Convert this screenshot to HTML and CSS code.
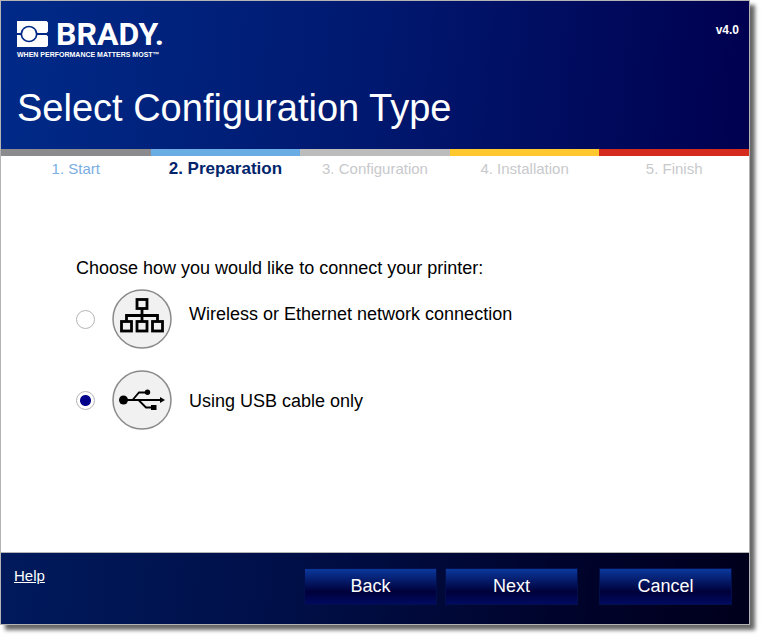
FILE: index.html
```html
<!DOCTYPE html>
<html lang="en">
<head>
  <meta charset="UTF-8">
  <meta name="viewport" content="width=device-width, initial-scale=1.0">
  <title>Select Configuration Type</title>
  <link rel="stylesheet" href="styles.css">
</head>
<body>
  <form class="wizard">
    <header class="banner">
      <div class="banner-top">
        <div class="logo">
          <div class="logo-row">
            <svg class="logo-mark" viewBox="0 0 31 26" aria-hidden="true">
              <path fill="#fff" d="M0 0H29.500L31 1.500V10.500L29.500 12H20.500A8.600 8.600 0 0 0 3.500 12H0Z"/>
              <path fill="#fff" d="M0 14H3.500A8.600 8.600 0 0 0 20.500 14H29.500L31 15.500V24.500L29.500 26H0Z"/>
              <circle cx="12" cy="13" r="6.800" fill="#fff"/>
            </svg>
            <span class="logo-name">BRADY.</span>
          </div>
          <div class="tagline">WHEN PERFORMANCE MATTERS MOST™</div>
        </div>
        <span class="version">v4.0</span>
      </div>
      <h1>Select Configuration Type</h1>
    </header>

    <ol class="steps">
      <li class="step start">1. Start</li>
      <li class="step preparation" aria-current="step">2. Preparation</li>
      <li class="step configuration">3. Configuration</li>
      <li class="step installation">4. Installation</li>
      <li class="step finish">5. Finish</li>
    </ol>

    <main class="content">
      <p class="question" id="question">Choose how you would like to connect your printer:</p>
      <div class="options" role="radiogroup" aria-labelledby="question">
        <div class="option-marks">
          <div class="option-mark">
            <input type="radio" name="connection" id="network" value="network">
            <svg class="option-icon" viewBox="0 0 60 60" aria-hidden="true">
              <circle cx="30" cy="30" r="29" fill="#f1f1f1" stroke="#8a8a8a" stroke-width="1.500"/>
              <g fill="none" stroke="#000" stroke-width="2.800">
                <rect x="25" y="10.500" width="10" height="9"/>
                <rect x="9.500" y="32.500" width="10" height="9.500"/>
                <rect x="25" y="32.500" width="10" height="9.500"/>
                <rect x="40.500" y="32.500" width="10" height="9.500"/>
                <path d="M30 20V33M14.500 33V26.500H45.500V33"/>
              </g>
            </svg>
          </div>
          <div class="option-mark">
            <input type="radio" name="connection" id="usb" value="usb" checked>
            <svg class="option-icon" viewBox="0 0 60 60" aria-hidden="true">
              <circle cx="30" cy="30" r="29" fill="#f1f1f1" stroke="#8a8a8a" stroke-width="1.500"/>
              <circle cx="11.500" cy="30" r="4.500"/>
              <path d="M12 30H50M20.500 30L27 22.500H35M26.500 30L34 37.500H40" fill="none" stroke="#000" stroke-width="1.800"/>
              <path d="M48 27L53 30L48 33Z"/>
              <circle cx="35.500" cy="22.300" r="2.700"/>
              <rect x="39" y="35" width="5.500" height="5"/>
            </svg>
          </div>
        </div>
        <div class="option-names">
          <label for="network">Wireless or Ethernet network connection</label>
          <label for="usb">Using USB cable only</label>
        </div>
      </div>
    </main>

    <footer class="actions">
      <a class="help" href="#">Help</a>
      <div class="buttons">
        <button type="button">Back</button>
        <button type="button">Next</button>
        <button type="button" class="cancel">Cancel</button>
      </div>
    </footer>
  </form>
</body>
</html>
```
FILE: styles.css
```css
* {
  box-sizing: border-box;
}

body {
  margin: 0;
  padding: 0 15px 15px 0;
  background: #fff;
  color: #000;
  font-family: "Liberation Sans", Arial, sans-serif;
  font-size: 18px;
  line-height: 20px;
}

.wizard {
  display: flex;
  flex-direction: column;
  min-height: calc(100vh - 15px);
  border: 1px solid #b4b4b4;
  background: #fff;
  box-shadow: 5px 5px 4px rgba(0, 0, 0, 0.6);
}

.banner {
  height: 148px;
  padding: 19px 10px 0 16px;
  background: linear-gradient(95deg, #002a88, #00186f 50%, #00004f);
  color: #fff;
}

.banner-top {
  display: flex;
  justify-content: space-between;
}

.logo-row {
  display: flex;
  align-items: center;
  gap: 8px;
  height: 28px;
}

.logo-mark {
  width: 31px;
  height: 26px;
}

.logo-name {
  font-family: "Liberation Sans Narrow", Roboto, sans-serif;
  font-size: 32px;
  font-weight: bold;
  line-height: 28px;
}

.tagline {
  font-size: 7px;
  font-weight: bold;
  line-height: 14px;
  white-space: nowrap;
}

.version {
  font-size: 12px;
  font-weight: bold;
}

h1 {
  margin: 22px 0 0;
  font-size: 38px;
  font-weight: normal;
  line-height: 48px;
}

.steps {
  display: grid;
  grid-template-columns: repeat(5, 1fr);
  margin: 0;
  padding: 0;
  list-style: none;
  text-align: center;
}

.step {
  padding-top: 3px;
  border-top: 7px solid;
  color: #c8c9cc;
  font-size: 15px;
}

.start {
  border-color: #8b8b8e;
  color: #79aee3;
}

.preparation {
  border-color: #6aade4;
  color: #00246b;
  font-size: 17px;
  font-weight: bold;
}

.configuration {
  border-color: #bcbcbc;
}

.installation {
  border-color: #ffc82e;
}

.finish {
  border-color: #d52b1e;
}

.content {
  flex: 1;
  padding: 79px 24px 24px 75px;
}

.question {
  margin: 0;
}

.options {
  display: flex;
  gap: 17px;
  margin-top: 11px;
}

.option-marks {
  display: flex;
  flex-direction: column;
  gap: 21px;
}

.option-mark {
  display: flex;
  align-items: center;
  gap: 17px;
}

.option-mark input {
  appearance: none;
  width: 19px;
  height: 19px;
  margin: 0;
  border: 1px solid #b4b4b4;
  border-radius: 50%;
  background: #fff;
}

.option-mark input:checked {
  background: radial-gradient(circle, #00008b 5px, #fff 6px);
}

.option-icon {
  width: 60px;
  height: 60px;
}

.option-names {
  display: flex;
  flex-direction: column;
  gap: 67px;
  padding-top: 15px;
}

.actions {
  display: flex;
  justify-content: space-between;
  height: 72px;
  padding: 15px 17px 0 13px;
  border-top: 1px solid #b4b4b4;
  background: linear-gradient(95deg, #001a5c, #00104a 35%, #000228 80%, #00001c);
}

.help {
  color: #fff;
  font-size: 15px;
  line-height: 16px;
}

.buttons {
  display: flex;
  gap: 8px;
}

button {
  width: 133px;
  height: 37px;
  padding: 0;
  border: 1px solid #020f4a;
  background: linear-gradient(#0a389c, #00003a 65%, #000a60);
  color: #fff;
  font: 18px "Liberation Sans", Arial, sans-serif;
}

.cancel {
  margin-left: 13px;
}
```
